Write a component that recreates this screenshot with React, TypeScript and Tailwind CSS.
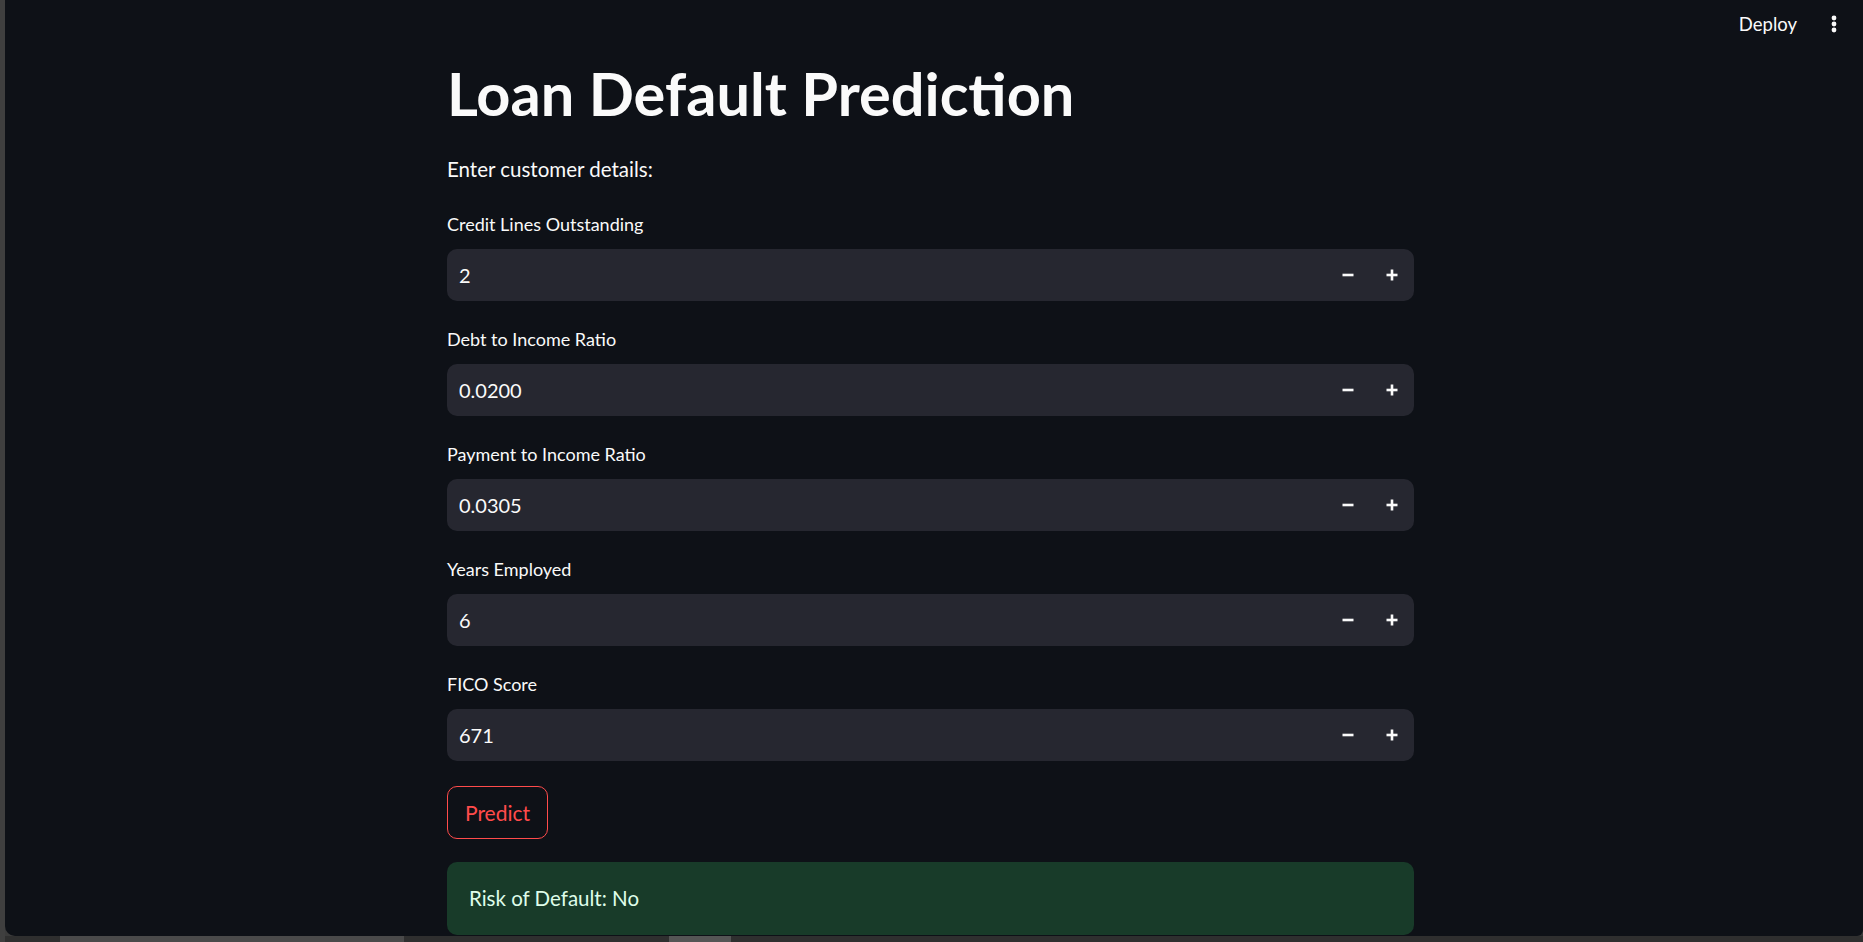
type Field = {
  label: string;
  value: string;
};

const fields: Field[] = [
  { label: "Credit Lines Outstanding", value: "2" },
  { label: "Debt to Income Ratio", value: "0.0200" },
  { label: "Payment to Income Ratio", value: "0.0305" },
  { label: "Years Employed", value: "6" },
  { label: "FICO Score", value: "671" },
];

function MinusIcon() {
  return (
    <svg width="12" height="12" viewBox="0 0 12 12" fill="#fafafa">
      <rect x="0.5" y="4.7" width="11" height="2.6" />
    </svg>
  );
}

function PlusIcon() {
  return (
    <svg width="12" height="12" viewBox="0 0 12 12" fill="#fafafa">
      <rect x="0.5" y="4.7" width="11" height="2.6" />
      <rect x="4.7" y="0.5" width="2.6" height="11" />
    </svg>
  );
}

function NumberInput({ label, value }: Field) {
  return (
    <div className="flex flex-col">
      <div className="h-[27px] text-[18px] leading-[27px] text-[#fafafa]">{label}</div>
      <div className="mt-[11px] flex h-[52px] items-center rounded-[10px] bg-[#262730]">
        <input
          type="text"
          defaultValue={value}
          className="h-full flex-1 bg-transparent pl-[12px] text-[20px] text-[#fafafa] outline-none"
        />
        <button className="flex h-full w-[44px] items-center justify-center">
          <MinusIcon />
        </button>
        <button className="flex h-full w-[44px] items-center justify-center">
          <PlusIcon />
        </button>
      </div>
    </div>
  );
}

export default function App() {
  return (
    <div
      className="flex h-[942px] w-[1863px] overflow-hidden bg-[#3b3b3b]"
      style={{ fontFamily: "Lato, 'Noto Sans', sans-serif" }}
    >
      <div className="w-[5px] shrink-0 bg-[#3f3f3f]" />
      <div className="flex flex-1 flex-col">
        <div className="relative flex-1 overflow-hidden rounded-bl-[10px] rounded-br-[6px] bg-[#0e1117]">
          <div className="absolute right-[26px] top-[10px] flex items-center gap-[34px] text-[#fafafa]">
            <span className="text-[18.5px] leading-[28px]">Deploy</span>
            <svg width="6" height="18" viewBox="0 0 6 18" fill="#fafafa">
              <circle cx="3" cy="3" r="2.4" />
              <circle cx="3" cy="9" r="2.4" />
              <circle cx="3" cy="15" r="2.4" />
            </svg>
          </div>

          <main className="ml-[442px] flex w-[967px] flex-col pt-[57px]">
            <h1 className="text-[59.5px] font-bold leading-[72px] text-[#fafafa]">
              Loan Default Prediction
            </h1>
            <p className="mt-[23px] h-[35px] text-[20.5px] leading-[35px] text-[#fafafa]">
              Enter customer details:
            </p>

            <div className="mt-[24px] flex flex-col gap-[25px]">
              {fields.map((f) => (
                <NumberInput key={f.label} label={f.label} value={f.value} />
              ))}
            </div>

            <div className="mt-[25px]">
              <button className="h-[53px] rounded-[10px] border border-[#ff4b4b] px-[17px] text-[21px] text-[#ff4b4b]">
                Predict
              </button>
            </div>

            <div className="mt-[23px] flex h-[73px] items-center rounded-[10px] bg-[#183b29] pl-[22px] text-[20.5px] text-[#dffde9]">
              Risk of Default: No
            </div>
          </main>
        </div>
        <div className="flex h-[6px] shrink-0 bg-[#2f2f2f]">
          <div className="ml-[55px] w-[344px] bg-[#4a4a4a]" />
          <div className="ml-[265px] w-[62px] bg-[#555555]" />
        </div>
      </div>
    </div>
  );
}
